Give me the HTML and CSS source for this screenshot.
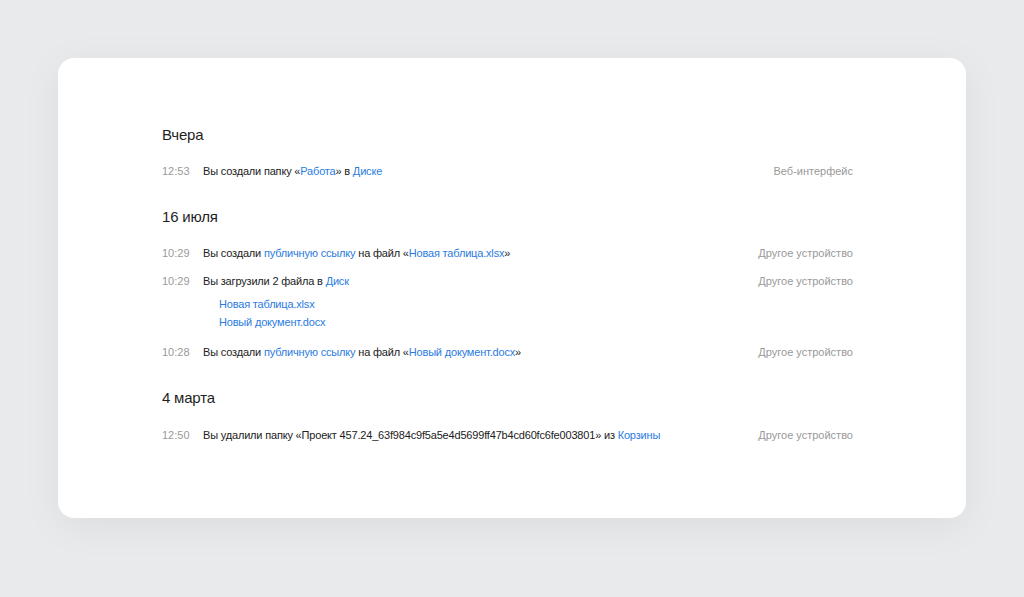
FILE: index.html
```html
<!DOCTYPE html>
<html lang="ru">
<head>
    <meta charset="UTF-8">
    <meta name="viewport" content="width=device-width, initial-scale=1.0">
    <link rel="stylesheet" href="styles.css">
    <title>История</title>
</head>
<body>
    <div class="card">
        <div class="day">
            <h2 class="day-title">Вчера</h2>
            <div class="event">
                <span class="time">12:53</span>
                <span class="text">Вы создали папку «<a href="#">Работа</a>» в <a href="#">Диске</a></span>
                <span class="device">Веб-интерфейс</span>
            </div>
        </div>

        <div class="day">
            <h2 class="day-title">16 июля</h2>
            <div class="event">
                <span class="time">10:29</span>
                <span class="text">Вы создали <a href="#">публичную ссылку</a> на файл «<a href="#">Новая таблица.xlsx</a>»</span>
                <span class="device">Другое устройство</span>
            </div>
            <div class="event">
                <span class="time">10:29</span>
                <div class="text">
                    Вы загрузили 2 файла в <a href="#">Диск</a>
                    <div class="files">
                        <a href="#">Новая таблица.xlsx</a>
                        <a href="#">Новый документ.docx</a>
                    </div>
                </div>
                <span class="device">Другое устройство</span>
            </div>
            <div class="event">
                <span class="time">10:28</span>
                <span class="text">Вы создали <a href="#">публичную ссылку</a> на файл «<a href="#">Новый документ.docx</a>»</span>
                <span class="device">Другое устройство</span>
            </div>
        </div>

        <div class="day">
            <h2 class="day-title">4 марта</h2>
            <div class="event">
                <span class="time">12:50</span>
                <span class="text">Вы удалили папку «Проект 457.24_63f984c9f5a5e4d5699ff47b4cd60fc6fe003801» из <a href="#">Корзины</a></span>
                <span class="device">Другое устройство</span>
            </div>
        </div>
    </div>
</body>
</html>
```

FILE: styles.css
```css
body {
    margin: 0;
    height: 597px;
    background: #e9eaec;
    font-family: "Liberation Sans", Arial, sans-serif;
    color: #222;
    overflow: hidden;
}

.card {
    margin: 58px 58px 0;
    height: 460px;
    box-sizing: border-box;
    padding: 67px 113px 0 104px;
    background: #fff;
    border-radius: 16px;
    box-shadow: 0 8px 40px rgba(0, 0, 0, 0.06);
}

.day {
    display: flex;
    flex-direction: column;
    gap: 10px;
    margin-bottom: 27px;
}

.day:last-child .event {
    margin-top: 1px;
}

.day-title {
    margin: 0 0 7px;
    font-size: 15px;
    font-weight: normal;
    line-height: 20px;
    letter-spacing: -0.2px;
    color: #1f1f1f;
}

.event {
    display: flex;
    font-size: 11px;
    line-height: 18px;
}

.time {
    width: 41px;
    flex-shrink: 0;
    color: #999;
}

.text {
    flex: 1;
    letter-spacing: -0.18px;
}

.device {
    color: #999;
}

a {
    color: #2a7be0;
    text-decoration: none;
}

.files {
    display: flex;
    flex-direction: column;
    margin: 5px 0 2px 16px;
}
```
